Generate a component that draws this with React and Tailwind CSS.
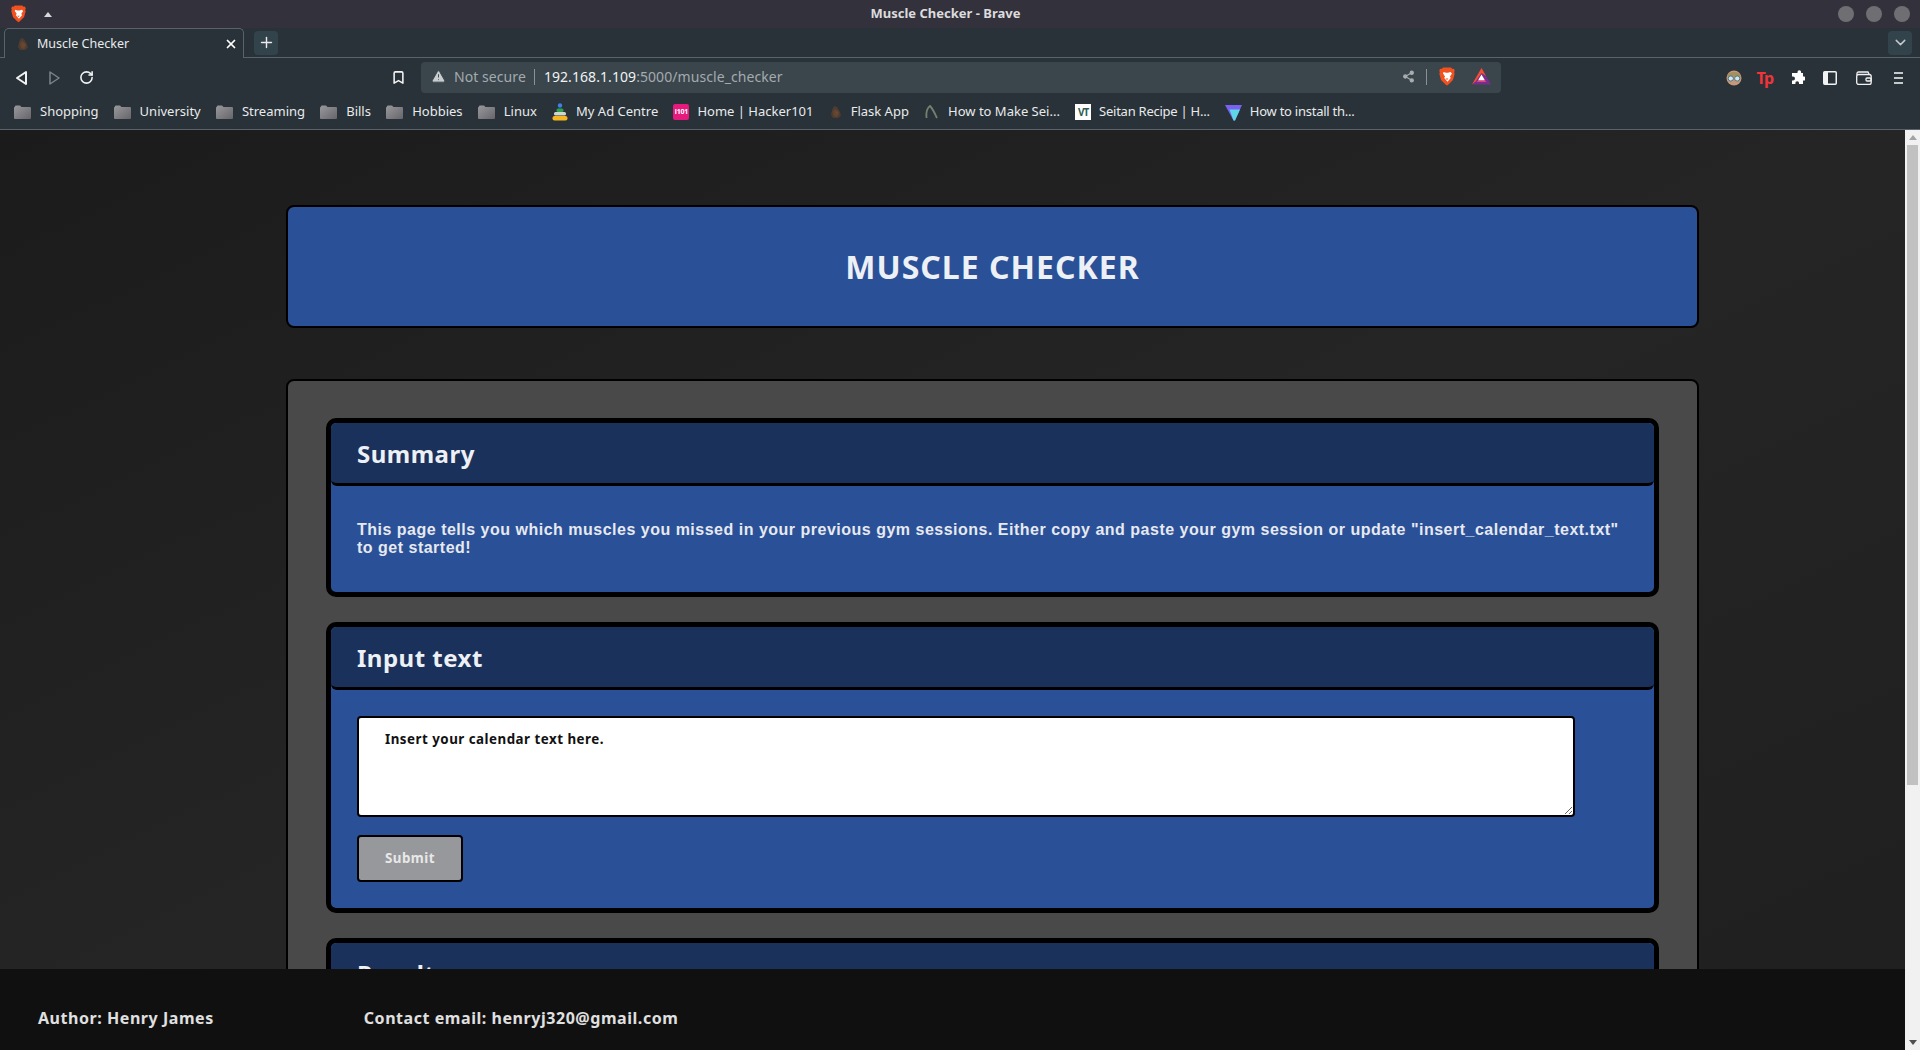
import React from "react";
import { X, Plus, ChevronDown, RotateCw, Bookmark, TriangleAlert, Share2 } from "lucide-react";

const bookmarks = [
    { name: "Shopping", icon: "folder" },
    { name: "University", icon: "folder" },
    { name: "Streaming", icon: "folder" },
    { name: "Bills", icon: "folder" },
    { name: "Hobbies", icon: "folder" },
    { name: "Linux", icon: "folder" },
    { name: "My Ad Centre", icon: "ad" },
    { name: "Home | Hacker101", icon: "h101" },
    { name: "Flask App", icon: "flask" },
    { name: "How to Make Sei...", icon: "sickle" },
    { name: "Seitan Recipe | H...", icon: "vt", tight: true },
    { name: "How to install th...", icon: "proton", tight: true }
];

function BraveLogo({ size = 16 }) {
    return (
        <svg width={size} height={size * 1.18} viewBox="0 0 16 19">
            <path d="M4 0.500h8l1.500 1.500 1.500-.3.800 2-.6 1.500.5 1.500-1.700 6.300-4.500 4.500-1.500 1-1.500-1-4.500-4.500L.300 6.700.800 5.200.2 3.700l.8-2 1.500.3z" fill="#f1501f" />
            <path d="M4.500 5l2.500.8h2l2.500-.8 1.500 1.500-2 3 .8 1.500-3.300 3.800-3.300-3.800.8-1.500-2-3z" fill="#fff" />
            <path d="M6.500 11.500h3L8 13z" fill="#f1501f" />
        </svg>
    );
}

function BatLogo() {
    return (
        <svg width="19" height="17" viewBox="0 0 19 17">
            <path d="M9.500 0L19 16.500H0z" fill="#7a2c8c" />
            <path d="M9.500 0L14 8 9.500 5 4 13 0 16.500z" fill="#f4502a" />
            <path d="M9.500 6.500L13 12.500H6z" fill="#fff" />
            <path d="M6 12.500h7l1.500 1.500h-10z" fill="#e0457a" />
        </svg>
    );
}

function Favicon() {
    return (
        <svg width="14" height="14" viewBox="0 0 14 14">
            <path d="M5 1l3 1 3 5 1 4-3 2H4L2 10l1-5z" fill="#4d3c32" />
            <path d="M6 4l3 2 1 3-2 3-3-1-1-4z" fill="#65452f" />
            <circle cx="8" cy="8" r="1.200" fill="#6f4a30" />
        </svg>
    );
}

function BookmarkIcon({ type }) {
    if (type === "folder") {
        return (
            <svg width="17" height="14" viewBox="0 0 17 14">
                <defs>
                    <linearGradient id="folder" x1="0" y1="0" x2="1" y2="1">
                        <stop offset="0" stopColor="#9a9a9e" />
                        <stop offset="1" stopColor="#66666a" />
                    </linearGradient>
                </defs>
                <path d="M1 1.500Q1 .5 2 .5h4l1.500 1.500H16q1 0 1 1V13q0 1-1 1H1q-1 0-1-1V3q0-1 1-1.500z" fill="url(#folder)" />
            </svg>
        );
    }
    if (type === "ad") {
        return (
            <svg width="16" height="18" viewBox="0 0 16 18">
                <circle cx="8" cy="2.500" r="2.200" fill="#3f7fe8" />
                <rect x="4.500" y="5.500" width="7" height="3.500" rx="1.500" fill="#2e9e4f" />
                <rect x="2" y="9" width="12" height="3.500" rx="1.500" fill="#cfd8c8" />
                <rect x="0.500" y="13" width="15" height="4.500" rx="2" fill="#f6b622" />
            </svg>
        );
    }
    if (type === "h101") {
        return (
            <div className="w-[16px] h-[16px] rounded-[2px] bg-[#e6197d] text-white text-[7px] font-bold leading-[16px] text-center tracking-[-0.2px]">l101</div>
        );
    }
    if (type === "flask") {
        return <Favicon />;
    }
    if (type === "sickle") {
        return (
            <svg width="14" height="16" viewBox="0 0 14 16" fill="none" className="mr-[2px]">
                <path d="M2.500 14C2 9 3 4 6 2c3 3 5 8 7 12" stroke="#76806f" strokeWidth="1.800" />
            </svg>
        );
    }
    if (type === "vt") {
        return <div className="w-[16px] h-[16px] bg-white text-[#2f5d50] text-[10px] font-bold leading-[16px] text-center tracking-[-1px]">VT</div>;
    }
    return (
        <svg width="17" height="17" viewBox="0 0 17 17">
            <path d="M0 1h17l-7 15.500H8.500z" fill="#7a62f0" />
            <path d="M4.500 5.500H15L10 16.500H8.500z" fill="#5fd6e8" />
        </svg>
    );
}

function Section({ title, children }) {
    return (
        <section className="border-[5px] border-black rounded-[10px] bg-[#2a5097]">
            <h2 className="h-[63px] pl-[26px] pt-[2px] flex items-center bg-[#1a315c] border-b-[3px] border-black rounded-[6px] text-[#edf0f5] text-[24px] font-bold tracking-[0.5px] font-['Noto_Sans',sans-serif]">
                {title}
            </h2>
            {children}
        </section>
    );
}

export default function App() {
    return (
        <div className="h-screen flex flex-col overflow-hidden bg-[#1e1e1e] font-['Noto_Sans',sans-serif]">
            {/* title bar */}
            <div className="h-[28px] shrink-0 flex items-center justify-between bg-[#32313c] pl-[11px] pr-[10px]">
                <div className="w-[300px] flex items-center gap-[18px]">
                    <BraveLogo size={15} />
                    <div className="w-0 h-0 border-x-[4px] border-x-transparent border-b-[5px] border-b-[#d8d8d8]" />
                </div>
                <div className="text-[13px] font-bold text-[#dcdcdc] mr-[30px]">Muscle Checker - Brave</div>
                <div className="w-[300px] flex justify-end gap-[12px]">
                    <div className="w-4 h-4 rounded-full bg-[#6f6f73]" />
                    <div className="w-4 h-4 rounded-full bg-[#6f6f73]" />
                    <div className="w-4 h-4 rounded-full bg-[#6f6f73]" />
                </div>
            </div>

            {/* tab strip */}
            <div className="h-[30px] shrink-0 flex items-center bg-[#283238] border-b border-[#59646a] pl-[4px] pr-[8px] relative">
                <div className="w-[240px] h-[30px] flex items-center pl-[11px] pr-[5px] bg-[#283238] border border-b-0 border-[#59646a] rounded-t-[5px] relative top-[0.5px]">
                    <Favicon />
                    <span className="ml-[7px] pt-[1px] text-[12.5px] text-[#e8eaec] flex-1">Muscle Checker</span>
                    <X size={14} strokeWidth={3} className="text-white" />
                </div>
                <div className="ml-[10px] w-[24px] h-[24px] rounded-[4px] bg-[#33434c] flex items-center justify-center">
                    <Plus size={17} strokeWidth={2} className="text-[#e8eaec]" />
                </div>
                <div className="ml-auto w-[24px] h-[24px] rounded-[4px] bg-[#33434c] flex items-center justify-center">
                    <ChevronDown size={17} strokeWidth={2} className="text-[#c4c9cc]" />
                </div>
            </div>

            {/* toolbar */}
            <div className="h-[37px] shrink-0 flex items-center bg-[#283238] pt-[2px] pl-[15px] pr-[14px]">
                <svg width="14" height="16" viewBox="0 0 14 16" fill="none" stroke="#f2f2f2" strokeWidth="2">
                    <path d="M11 2v12L2 8z" strokeLinejoin="round" />
                </svg>
                <svg width="14" height="16" viewBox="0 0 14 16" fill="none" stroke="#7c8488" strokeWidth="1.500" className="ml-[18px]">
                    <path d="M3 2v12l9-6z" strokeLinejoin="round" />
                </svg>
                <RotateCw size={15} strokeWidth={2.500} className="ml-[18px] text-[#f2f2f2]" />
                <Bookmark size={15} strokeWidth={2.500} className="ml-[297px] text-[#f2f2f2]" />
                <div className="ml-[15px] w-[1080px] h-[31px] pb-[2px] rounded-[4px] bg-[#3a464c] flex items-center pl-[10px] pr-[10px] text-[14px] tracking-[0.07px]">
                    <TriangleAlert size={15} fill="#c9cdcf" strokeWidth={1.500} className="text-[#3a464c]" />
                    <span className="ml-[8px] text-[#a3abaf]">Not secure</span>
                    <div className="ml-[8px] mr-[9px] w-px h-[16px] bg-[#8a9296]" />
                    <span className="text-[#f0f2f3]">192.168.1.109</span>
                    <span className="text-[#a3abaf]">:5000/muscle_checker</span>
                    <Share2 size={13} fill="#a8aeb1" className="ml-auto text-[#a8aeb1]" />
                    <div className="ml-[11px] mr-[12px] w-px h-[16px] bg-[#8a9296]" />
                    <BraveLogo size={16} />
                    <div className="ml-[17px]"><BatLogo /></div>
                </div>
                <div className="ml-auto flex items-center">
                    <svg width="16" height="16" viewBox="0 0 16 16">
                        <circle cx="8" cy="8" r="7.500" fill="#c8977a" />
                        <path d="M1 6.500a7.500 7 0 0 1 14 0z" fill="#a38f60" />
                        <circle cx="4.800" cy="8.500" r="2.600" fill="#cfe8ee" stroke="#4f7480" />
                        <circle cx="11.200" cy="8.500" r="2.600" fill="#cfe8ee" stroke="#4f7480" />
                    </svg>
                    <div className="ml-[15px] w-[18px] text-[#f0343a] text-[16px] font-bold leading-none tracking-[-1px]">Tp</div>
                    <svg width="15" height="15" viewBox="0 0 15 15" fill="#fff" className="ml-[15px]">
                        <path d="M5.500 3h2V2a1.800 1.800 0 0 1 3.600 0v1H13v3.500h1a2 2 0 0 1 0 4h-1V14H9v-1a1.800 1.800 0 0 0-3.600 0v1H2v-3.500h1a2 2 0 0 0 0-4H2V3z" />
                    </svg>
                    <svg width="14" height="14" viewBox="0 0 14 14" className="ml-[18.5px]">
                        <rect x="0.750" y="0.750" width="12.500" height="12.500" rx="1" fill="none" stroke="#f2f2f2" strokeWidth="1.500" />
                        <rect x="1" y="1" width="4" height="12" fill="#f2f2f2" />
                    </svg>
                    <svg width="16" height="14" viewBox="0 0 16 14" fill="none" stroke="#f2f2f2" strokeWidth="1.300" className="ml-[19px]">
                        <path d="M1 4V2.500Q1 1 2.500 1H12l1 2" />
                        <rect x="0.700" y="3.500" width="14.500" height="10" rx="2" />
                        <rect x="10" y="7" width="5" height="3" rx="1" />
                    </svg>
                    <div className="ml-[22px] w-[9px] flex flex-col gap-[3px] mr-[3px]">
                        <div className="h-[2px] bg-[#c4c9cc]" />
                        <div className="h-[2px] bg-[#c4c9cc]" />
                        <div className="h-[2px] bg-[#c4c9cc]" />
                    </div>
                </div>
            </div>

            {/* bookmarks bar */}
            <div className="h-[35px] shrink-0 flex items-center gap-[15.2px] bg-[#283238] border-b border-[#59646a] pl-[14px] text-[13px] text-[#e8eaec]">
                {bookmarks.map((b) => (
                    <div key={b.name} className={b.icon === "folder" ? "flex items-center gap-[9px]" : "flex items-center gap-[8px]"}>
                        <BookmarkIcon type={b.icon} />
                        <span className={b.tight ? "tracking-[-0.25px]" : ""}>{b.name}</span>
                    </div>
                ))}
            </div>

            {/* page */}
            <div className="flex-1 min-h-0 flex">
                <div className="flex-1 min-w-0 flex flex-col bg-gradient-to-br from-[#1b1b1b] via-[#252525] to-[#1f1f1f]">
                    <main className="flex-1 min-h-0 overflow-hidden pt-[75px] pl-[286px]">
                        <header className="w-[1413px] h-[123px] pt-[1px] flex items-center justify-center rounded-[8px] border-2 border-black bg-[#2a5097]">
                            <h1 className="text-[32px] font-bold tracking-[1px] text-[#edf0f5]">MUSCLE CHECKER</h1>
                        </header>

                        <div className="w-[1413px] mt-[51px] p-[38px] pt-[37px] flex flex-col gap-[25px] rounded-[8px] border-2 border-black bg-[#494949]">
                            <Section title="Summary">
                                <p className="px-[26px] py-[35px] text-[16px] leading-[18px] font-bold tracking-[0.5px] text-[#e6e9f0] font-['Liberation_Sans',sans-serif]">
                                    This page tells you which muscles you missed in your previous gym sessions. Either copy and paste your gym session or update "insert_calendar_text.txt" to get started!
                                </p>
                            </Section>

                            <Section title="Input text">
                                <form className="p-[26px] flex flex-col items-start gap-[18px]">
                                    <textarea
                                        defaultValue="Insert your calendar text here."
                                        className="block w-[1218px] h-[101px] pl-[26px] pt-[12px] bg-white border-2 border-black rounded-[4px] text-[13.33px] leading-[19px] font-bold tracking-[0.5px] text-[#111] outline-none"
                                    />
                                    <button
                                        type="button"
                                        className="w-[106px] h-[47px] bg-[#97989b] border-2 border-black rounded-[4px] text-[13.33px] font-bold tracking-[0.5px] text-[#e8e8e8]"
                                    >
                                        Submit
                                    </button>
                                </form>
                            </Section>

                            <Section title="Results">
                                <div className="h-[200px]" />
                            </Section>
                        </div>
                    </main>

                    <footer className="h-[81px] shrink-0 flex items-center gap-[150px] bg-[#101010] pl-[38px] pt-[17px] text-[16px] font-bold tracking-[0.55px] text-[#e0e0e0]">
                        <span>Author: Henry James</span>
                        <span>Contact email: henryj320@gmail.com</span>
                    </footer>
                </div>

                {/* scrollbar */}
                <div className="w-[15px] shrink-0 flex flex-col items-center bg-[#f1f1f1]">
                    <div className="mt-[5px] w-0 h-0 border-x-[4px] border-x-transparent border-b-[5px] border-b-[#a3a3a3]" />
                    <div className="mt-[5px] w-[11px] h-[640px] bg-[#c1c1c1]" />
                    <div className="mt-auto mb-[5px] w-0 h-0 border-x-[4px] border-x-transparent border-t-[5px] border-t-[#505050]" />
                </div>
            </div>
        </div>
    );
}
